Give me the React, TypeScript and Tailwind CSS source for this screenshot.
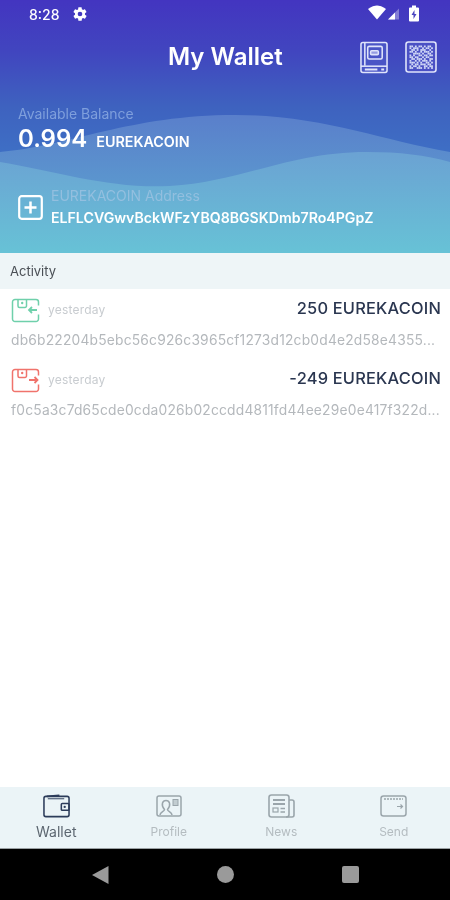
import React from "react";

const font = { fontFamily: '"Inter", "Liberation Sans", sans-serif' };

function Waves() {
  return (
    <svg className="absolute inset-0 w-full h-full" viewBox="0 0 450 253" preserveAspectRatio="none">
      <defs>
        <linearGradient id="hdr" x1="0" y1="0" x2="0" y2="1">
          <stop offset="0" stopColor="#4335c0" />
          <stop offset="0.2" stopColor="#4145bf" />
          <stop offset="0.42" stopColor="#3e62bf" />
          <stop offset="0.65" stopColor="#3e72c6" />
          <stop offset="1" stopColor="#3f78c4" />
        </linearGradient>
        <linearGradient id="w1" x1="0" y1="0" x2="0" y2="1">
          <stop offset="0" stopColor="#5a7fcb" />
          <stop offset="0.5" stopColor="#5b96ce" />
          <stop offset="1" stopColor="#62a8d2" />
        </linearGradient>
        <linearGradient id="w2" x1="0" y1="0" x2="0" y2="1">
          <stop offset="0" stopColor="#6ba2d3" />
          <stop offset="1" stopColor="#67c2d6" />
        </linearGradient>
      </defs>
      <rect width="450" height="253" fill="url(#hdr)" />
      <path d="M0 152C70 146 130 115 235 115C320 115 380 140 450 152V253H0Z" fill="url(#w1)" />
      <path d="M0 162C60 172 110 189 170 186C240 182 290 152 367 152C400 152 425 155 450 162V253H0Z" fill="url(#w2)" />
    </svg>
  );
}

function Gear() {
  return (
    <svg width="16" height="16" viewBox="0 0 24 24" fill="#fff">
      <path d="M19.4 13c.04-.32.1-.66.1-1s-.06-.68-.1-1l2.1-1.65c.2-.15.24-.42.12-.64l-2-3.46c-.12-.22-.4-.3-.6-.22l-2.5 1c-.52-.4-1.08-.73-1.7-.98l-.37-2.65A.5.5 0 0 0 14 2h-4a.5.5 0 0 0-.5.42l-.37 2.65c-.62.25-1.18.58-1.7.98l-2.5-1c-.22-.08-.48 0-.6.22l-2 3.46c-.13.22-.07.49.12.64L4.6 11c-.04.32-.1.66-.1 1s.06.68.1 1l-2.1 1.65c-.2.15-.25.42-.12.64l2 3.46c.12.22.38.3.6.22l2.5-1c.52.4 1.08.73 1.7.98l.37 2.65c.04.24.25.42.5.42h4c.25 0 .46-.18.5-.42l.37-2.65c.62-.25 1.18-.58 1.7-.98l2.5 1c.22.08.48 0 .6-.22l2-3.46c.12-.22.08-.49-.12-.64zM12 15.5a3.5 3.5 0 1 1 0-7 3.5 3.5 0 0 1 0 7z" />
    </svg>
  );
}

function StatusIcons() {
  return (
    <svg width="56" height="20" viewBox="0 0 56 20">
      <path d="M0 5C3 2.500 7 1.500 9 1.500S15 2.500 18 5L9 15.500Z" fill="#fff" />
      <path d="M20 15.500L31 4.500V15.500Z" fill="#fff" fillOpacity="0.35" />
      <path d="M20 15.500L27 8.500V15.500Z" fill="#fff" />
      <path d="M42 3.500H44V1.500H48V3.500H50A1 1 0 0 1 51 4.500V16.500A1 1 0 0 1 50 17.500H42A1 1 0 0 1 41 16.500V4.500A1 1 0 0 1 42 3.500Z" fill="#fff" />
      <path d="M46.500 6L43.500 11H45.500V15L48.500 10H46.500Z" fill="#4a45c0" />
    </svg>
  );
}

function BookIcon() {
  return (
    <svg width="28" height="33" viewBox="0 0 29 33" fill="none" stroke="#dfe4fb" strokeWidth="1.600">
      <path d="M3 1H26A2 2 0 0 1 28 3V30A2 2 0 0 1 26 32H3A2 2 0 0 1 1 30V3A2 2 0 0 1 3 1Z" fill="#4a55c6" />
      <path d="M1 25.500H28" />
      <path d="M5 1V25" />
      <rect x="8" y="5" width="15" height="13" rx="1.500" />
      <rect x="11" y="9.500" width="8" height="4" rx="1" fill="#dfe4fb" fillOpacity="0.5" />
      <path d="M5 29H18M22 29H25" strokeWidth="2" />
    </svg>
  );
}

const qr = [
  "1101011010110",
  "1011100101101",
  "0110101110010",
  "1101001011101",
  "0011110100110",
  "1010011011011",
  "1101100101100",
  "0110111010011",
  "1001010111010",
  "1110101001101",
  "0101101110110",
  "1011010011011",
  "1100111010101",
];

function QrIcon() {
  return (
    <svg width="32" height="32" viewBox="0 0 32 32">
      <rect x="1" y="1" width="30" height="30" rx="2.500" fill="#4a50c4" stroke="#dfe4fb" strokeWidth="1.600" />
      {qr.map((row, y) =>
        row.split("").map((c, x) =>
          c === "1" ? <rect key={`${x}-${y}`} x={4.500 + x * 1.800} y={4.500 + y * 1.800} width="1.800" height="1.800" fill="#cfd6f6" /> : null
        )
      )}
    </svg>
  );
}

function PlusBox() {
  return (
    <svg width="25" height="25" viewBox="0 0 25 25" fill="none" stroke="#fff" strokeWidth="2.200">
      <rect x="1.200" y="1.200" width="22.600" height="22.600" rx="2.500" />
      <path d="M12.500 6.500V18.500M6.500 12.500H18.500" strokeWidth="2.500" />
    </svg>
  );
}

function TxIcon({ color, out }: { color: string; out?: boolean }) {
  return (
    <svg width="29" height="25" viewBox="0 0 29 25" fill="none" stroke={color} strokeWidth="1.500">
      <path d="M7 1.500H25A2.500 2.500 0 0 1 27.500 4V7.500M27.500 16.500V21A2.500 2.500 0 0 1 25 23.500H4A2.500 2.500 0 0 1 1.500 21V4A2.500 2.500 0 0 1 4 1.500H7" />
      <path d="M7 1V8A1.500 1.500 0 0 0 8.500 9.500H14A1.500 1.500 0 0 0 15.500 8V1" />
      <circle cx="11.200" cy="5" r="1.200" fill={color} stroke="none" />
      {out ? (
        <path d="M18 12H26.500M23.500 9L26.500 12L23.500 15" strokeWidth="1.800" />
      ) : (
        <path d="M26 12H18M21 9L18 12L21 15" strokeWidth="1.800" />
      )}
    </svg>
  );
}

function WalletTab() {
  return (
    <svg width="27" height="24" viewBox="0 0 28 24" fill="none" stroke="#2c3c5a" strokeWidth="1.600">
      <rect x="1" y="2" width="26" height="21" rx="2" />
      <path d="M4 2L17 1" />
      <path d="M5 4.500H22" strokeWidth="1" />
      <rect x="19" y="9.500" width="8" height="7" rx="1" />
      <circle cx="22.500" cy="13" r="1.200" fill="#2c3c5a" stroke="none" />
    </svg>
  );
}

function ProfileTab() {
  return (
    <svg width="26" height="22" viewBox="0 0 26 22" fill="none" stroke="#9aa5ab" strokeWidth="1.500">
      <rect x="1" y="1" width="24" height="20" rx="2" />
      <path d="M4 20C4 17 8.500 16.500 8.500 14.500C6.500 12.500 6 10 6.500 8C7.500 4.500 12.500 4.500 13.500 8C14 10 13.500 12.500 11.500 14.500C11.500 16.500 16 17 16 20" />
      <rect x="17" y="4.500" width="5" height="6" fill="#9aa5ab" fillOpacity="0.5" strokeWidth="1" />
    </svg>
  );
}

function NewsTab() {
  return (
    <svg width="27" height="24" viewBox="0 0 27 24" fill="none" stroke="#9aa5ab" strokeWidth="1.600">
      <rect x="1" y="1" width="20" height="22" rx="2.500" />
      <path d="M21 6H24A2 2 0 0 1 26 8V21A2 2 0 0 1 24 23H18" />
      <path d="M5 6H17M5 10H17" strokeWidth="2" />
      <rect x="5" y="14" width="5" height="4" strokeWidth="1.200" />
      <path d="M12.500 14.500H17M12.500 18H17" strokeWidth="1.500" />
    </svg>
  );
}

function SendTab() {
  return (
    <svg width="27" height="22" viewBox="0 0 27 22" fill="none" stroke="#9aa5ab" strokeWidth="1.500">
      <rect x="1" y="1" width="25" height="20" rx="2.500" />
      <path d="M4 4H23" strokeWidth="1.500" strokeDasharray="2 1" />
      <path d="M17 11.500H22.500M20.500 9.500L22.500 11.500L20.500 13.500" strokeWidth="1.200" />
    </svg>
  );
}

function Tx({ amount, hash, color, out }: { amount: string; hash: string; color: string; out?: boolean }) {
  return (
    <div className="h-[70px] pl-[11px] pr-[9px] pt-[6px]">
      <div className="flex items-center justify-between h-[30px]">
        <div className="flex items-center gap-[8px]">
          <TxIcon color={color} out={out} />
          <span className="text-[12px] text-[#c8ccd0] tracking-[0.2px]">yesterday</span>
        </div>
        <span className="text-[16.400px] font-medium leading-[26px] -translate-y-[2px] text-[#2a3650] tracking-[0.2px]">{amount}</span>
      </div>
      <div className="mt-[6px] text-[13.800px] leading-[18px] text-[#b4b8bc] whitespace-nowrap tracking-[0.2px]">{hash}</div>
    </div>
  );
}

function Tab({ icon, label, active }: { icon: React.ReactNode; label: string; active?: boolean }) {
  return (
    <div className="flex-1 flex flex-col items-center">
      <div className="h-[26px] flex items-center justify-center">{icon}</div>
      <span className={active ? "mt-[5px] text-[14px] leading-[16px] text-[#5c6670]" : "mt-[5px] text-[12px] leading-[16px] text-[#b4bcc0]"}>
        {label}
      </span>
    </div>
  );
}

export default function App() {
  return (
    <div className="w-[450px] h-[900px] flex flex-col bg-white overflow-hidden blur-[0.4px]" style={font}>
      <header className="relative h-[253px] shrink-0 text-white">
        <Waves />
        <div className="relative flex flex-col h-full">
          <div className="h-[28px] flex items-center justify-between pl-[29px] pr-[26px]">
            <div className="flex items-center gap-[12px]">
              <span className="text-[14px] font-medium">8:28</span>
              <Gear />
            </div>
            <StatusIcons />
          </div>
          <div className="mt-[12px] h-[34px] flex items-center justify-between pl-[168px] pr-[13px]">
            <h1 className="text-[24px] font-semibold leading-none">My Wallet</h1>
            <div className="flex items-center gap-[17px]">
              <BookIcon />
              <QrIcon />
            </div>
          </div>
          <div className="mt-[31px] pl-[18px]">
            <div className="text-[14px] leading-[18px] text-[#7f9fdc]">Available Balance</div>
            <div className="flex items-baseline gap-[9px] leading-[32px]">
              <span className="text-[24px] font-semibold">0.994</span>
              <span className="text-[14.300px] font-semibold">EUREKACOIN</span>
            </div>
          </div>
          <div className="mt-[28px] pl-[18px] flex items-center gap-[8px]">
            <PlusBox />
            <div>
              <div className="text-[14px] leading-[20px] text-[#93bfdf]">EUREKACOIN Address</div>
              <div className="mt-[2px] text-[14.150px] leading-[20px] font-semibold">ELFLCVGwvBckWFzYBQ8BGSKDmb7Ro4PGpZ</div>
            </div>
          </div>
        </div>
      </header>

      <div className="h-[36px] shrink-0 bg-[#eef5f7] px-[10px] flex items-center text-[13px] text-[#4a4f55]">
        <span className="translate-y-[1px]">Activity</span>
      </div>

      <main className="flex-1">
        <Tx amount="250 EUREKACOIN" hash="db6b22204b5ebc56c926c3965cf1273d12cb0d4e2d58e4355..." color="#6fd0ab" />
        <Tx amount="-249 EUREKACOIN" hash="f0c5a3c7d65cde0cda026b02ccdd4811fd44ee29e0e417f322d..." color="#f0736c" out />
      </main>

      <nav className="h-[62px] shrink-0 bg-[#ebf4f7] flex pt-[6px] border-b border-[#9aa0a3]">
        <Tab icon={<WalletTab />} label="Wallet" active />
        <Tab icon={<ProfileTab />} label="Profile" />
        <Tab icon={<NewsTab />} label="News" />
        <Tab icon={<SendTab />} label="Send" />
      </nav>

      <div className="h-[51px] shrink-0 bg-black flex items-center justify-center gap-[108px]">
        <svg width="17" height="18" viewBox="0 0 17 18"><path d="M16.500 0V18L0 9Z" fill="#9a9a9a" /></svg>
        <div className="w-[17px] h-[17px] rounded-full bg-[#9a9a9a]" />
        <div className="w-[17px] h-[17px] rounded-[2px] bg-[#9a9a9a]" />
      </div>
    </div>
  );
}
